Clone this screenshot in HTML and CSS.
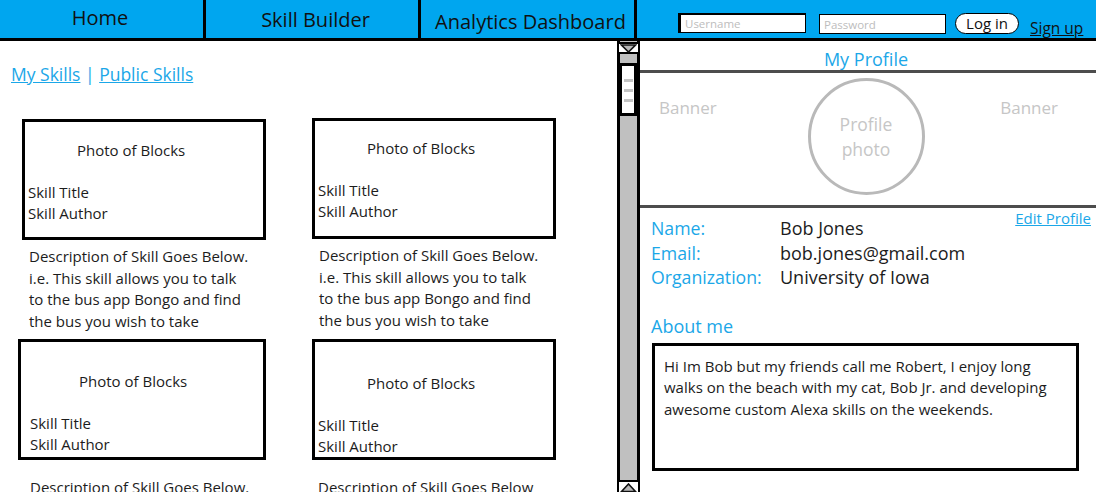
FILE: index.html
```html
<!DOCTYPE html>
<html lang="en">
<head>
<meta charset="utf-8">
<title>Skill Builder - My Profile</title>
<link rel="stylesheet" href="styles.css">
</head>
<body>
<header class="topbar">
  <nav class="tabs">
    <a class="tab tab--home">Home</a>
    <a class="tab tab--builder">Skill Builder</a>
    <a class="tab tab--analytics">Analytics Dashboard</a>
  </nav>
  <form class="login">
    <input class="field field--user" type="text" placeholder="Username">
    <input class="field field--pass" type="password" placeholder="Password">
    <button class="login-btn" type="button">Log in</button>
    <a class="signup" href="#">Sign up</a>
  </form>
</header>
<main class="main">
  <section class="skills">
    <div class="skill-links"><a href="#">My Skills</a> | <a href="#">Public Skills</a></div>
    <div class="skill-grid">
      <article class="skill">
        <div class="skill-card">
          <div class="skill-photo">Photo of Blocks</div>
          <div class="skill-meta">Skill Title<br>Skill Author</div>
        </div>
        <p class="skill-desc">Description of Skill Goes Below.<br>i.e. This skill allows you to talk<br>to the bus app Bongo and find<br>the bus you wish to take</p>
      </article>
      <article class="skill skill--up">
        <div class="skill-card skill-card--tight">
          <div class="skill-photo">Photo of Blocks</div>
          <div class="skill-meta">Skill Title<br>Skill Author</div>
        </div>
        <p class="skill-desc">Description of Skill Goes Below.<br>i.e. This skill allows you to talk<br>to the bus app Bongo and find<br>the bus you wish to take</p>
      </article>
      <article class="skill skill--row2 skill--shift">
        <div class="skill-card">
          <div class="skill-photo skill-photo--wide">Photo of Blocks</div>
          <div class="skill-meta skill-meta--wide">Skill Title<br>Skill Author</div>
        </div>
        <p class="skill-desc skill-desc--wide">Description of Skill Goes Below.<br>i.e. This skill allows you to talk<br>to the bus app Bongo and find<br>the bus you wish to take</p>
      </article>
      <article class="skill skill--row2">
        <div class="skill-card skill-card--deep">
          <div class="skill-photo">Photo of Blocks</div>
          <div class="skill-meta">Skill Title<br>Skill Author</div>
        </div>
        <p class="skill-desc skill-desc--narrow">Description of Skill Goes Below<br>i.e. This skill allows you to talk<br>to the bus app Bongo and find<br>the bus you wish to take</p>
      </article>
    </div>
  </section>
  <div class="scrollbar">
    <div class="scroll-btn">
      <svg width="17" height="9" viewBox="0 0 17 9"><polygon points="1.5,1 15.5,1 8.5,8" fill="#b8b8b8" stroke="#111" stroke-width="1.6"/></svg>
    </div>
    <div class="scroll-track">
      <div class="scroll-thumb">
        <span class="grip"></span><span class="grip"></span><span class="grip"></span>
      </div>
    </div>
    <div class="scroll-btn scroll-btn--bottom">
      <svg width="17" height="9" viewBox="0 0 17 9"><polygon points="1.5,8.5 15.5,8.5 8.5,1" fill="#b8b8b8" stroke="#111" stroke-width="1.6"/></svg>
    </div>
  </div>
  <aside class="profile">
    <h2 class="profile-title">My Profile</h2>
    <div class="banner">
      <span class="banner-text">Banner</span>
      <div class="avatar">Profile<br>photo</div>
      <span class="banner-text banner-text--right">Banner</span>
    </div>
    <div class="info">
      <dl class="info-list">
        <dt>Name:</dt><dd>Bob Jones</dd>
        <dt>Email:</dt><dd>bob.jones@gmail.com</dd>
        <dt>Organization:</dt><dd>University of Iowa</dd>
      </dl>
      <a class="edit-link" href="#">Edit Profile</a>
    </div>
    <h3 class="about-title">About me</h3>
    <div class="about-box">Hi Im Bob but my friends call me Robert, I enjoy long walks on the beach with my cat, Bob Jr. and developing awesome custom Alexa skills on the weekends.</div>
  </aside>
</main>
</body>
</html>
```

FILE: styles.css
```css
* { box-sizing: border-box; }
html, body {
  margin: 0;
  padding: 0;
  width: 1096px;
  height: 492px;
  overflow: hidden;
  background: #fff;
  font-family: "Open Sans", "Noto Sans", sans-serif;
  color: #1c1c1c;
}

/* ---------- top bar ---------- */
.topbar {
  display: flex;
  height: 41px;
  background: #00a6ef;
  border-bottom: 3px solid #000;
}
.tabs { display: flex; }
.tab {
  display: block;
  height: 38px;
  border-right: 3px solid #000;
  text-align: center;
  font-size: 20px;
  line-height: 26px;
  color: #111;
  text-decoration: none;
  white-space: nowrap;
}
.tab--home { width: 206px; padding-top: 5px; padding-right: 3px; }
.tab--builder { width: 215px; padding-top: 7px; padding-left: 7px; }
.tab--analytics { width: 216px; padding-top: 9px; padding-left: 6px; }

.login {
  display: flex;
  align-items: flex-start;
  margin: 0;
  padding-left: 41px;
}
.field {
  width: 128px;
  height: 20px;
  margin-top: 13px;
  padding: 0 0 0 4px;
  background: #fff;
  border: 1px solid #000;
  font-family: inherit;
  font-size: 11.5px;
  outline: none;
}
.field::placeholder { color: #bdbdbd; }
.field--user { border-width: 2px 1px 1px 3px; }
.field--pass { width: 127px; margin-left: 13px; margin-top: 14px; border-width: 1.5px; }
.login-btn {
  width: 64px;
  height: 21px;
  margin: 13px 0 0 9px;
  padding: 0;
  background: #fff;
  border: 1.5px solid #000;
  border-radius: 11px;
  font-family: inherit;
  font-size: 15px;
  line-height: 17px;
  color: #111;
}
.signup {
  margin: 17px 0 0 11px;
  font-size: 15.5px;
  line-height: 22px;
  color: #111;
  text-decoration: underline;
}

/* ---------- main ---------- */
.main {
  display: flex;
  height: 451px;
}

.skills {
  width: 617px;
  padding: 21px 0 0 11px;
  overflow: hidden;
}
.skill-links {
  font-size: 17.5px;
  line-height: 24px;
  color: #1ba7e8;
}
.skill-links a { color: #1ba7e8; text-decoration: underline; }

.skill-grid {
  display: grid;
  grid-template-columns: 244px 244px;
  column-gap: 46px;
  row-gap: 7px;
  margin: 33px 0 0 11px;
}
.skill--shift { margin-left: -4px; }
.skill--up { margin-top: -1px; }
.skill-card {
  height: 121px;
  border: 3px solid #000;
  padding-top: 18px;
}
.skill-card--tight { padding-top: 17px; }
.skill--row2 .skill-card { padding-top: 29px; }
.skill--row2 .skill-card--deep { padding-top: 31px; }
.skill-photo {
  padding-left: 52px;
  font-size: 15px;
  line-height: 20px;
}
.skill-photo--wide { padding-left: 58px; }
.skill-meta {
  margin-top: 22px;
  padding-left: 3px;
  font-size: 15px;
  line-height: 21px;
}
.skill-meta--wide { padding-left: 9px; }
.skill-desc {
  margin: 6px 0 0;
  padding-left: 7px;
  font-size: 15px;
  line-height: 21.5px;
  white-space: nowrap;
}
.skill--row2 .skill-desc { margin-top: 17px; }
.skill-desc--wide { padding-left: 12px; }
.skill-desc--narrow { padding-left: 6px; }

/* ---------- scrollbar ---------- */
.scrollbar {
  display: flex;
  flex-direction: column;
  width: 23px;
  background: #c0c0c0;
  border-left: 3px solid #000;
  border-right: 3px solid #000;
}
.scroll-btn {
  height: 12px;
  margin: 1px -3px 0;
  background: #fff;
  border: 2px solid #000;
  display: flex;
  align-items: center;
  justify-content: center;
}
.scroll-btn--bottom { margin: 0 -3px; border-bottom: 0; }
.scroll-track { flex: 1; padding-top: 9px; }
.scroll-thumb {
  width: 18px;
  height: 53px;
  margin-left: -1px;
  background: #fff;
  border: 3px solid #000;
  padding: 13px 0 0 2px;
  display: flex;
  flex-direction: column;
  gap: 7px;
}
.grip {
  display: block;
  width: 9px;
  height: 3px;
  background: #c4c4c4;
}

/* ---------- profile ---------- */
.profile {
  width: 456px;
}
.profile-title {
  margin: 0;
  height: 32px;
  padding: 6px 4px 0 0;
  border-bottom: 3px solid #4d4d4d;
  text-align: center;
  font-weight: normal;
  font-size: 18px;
  line-height: 24px;
  color: #1ba7e8;
}
.banner {
  display: grid;
  grid-template-columns: 1fr 117px 1fr;
  height: 135px;
  border-bottom: 3px solid #4d4d4d;
}
.banner-text {
  padding: 23px 0 0 19px;
  font-size: 17px;
  line-height: 24px;
  color: #c6c6c6;
}
.banner-text--right { justify-self: end; padding: 23px 38px 0 0; }
.avatar {
  width: 117px;
  height: 117px;
  margin-top: 5px;
  margin-left: -2px;
  border: 3px solid #b9b9b9;
  border-radius: 50%;
  display: flex;
  align-items: center;
  justify-content: center;
  text-align: center;
  font-size: 17.5px;
  line-height: 25px;
  color: #c6c6c6;
}

.info {
  display: flex;
  justify-content: space-between;
  padding: 0 5px 0 11px;
}
.info-list {
  display: grid;
  grid-template-columns: 129px auto;
  margin: 8px 0 0;
  font-size: 18px;
  line-height: 24.5px;
}
.info-list dt { color: #1ba7e8; font-size: 17.7px; }
.info-list dd { margin: 0; color: #1c1c1c; }
.edit-link {
  font-size: 15px;
  line-height: 20px;
  color: #1ba7e8;
  text-decoration: underline;
}
.about-title {
  margin: 24px 0 0 11px;
  font-weight: normal;
  font-size: 18px;
  line-height: 24px;
  color: #1ba7e8;
}
.about-box {
  width: 427px;
  height: 128px;
  margin: 5px 0 0 12px;
  padding: 10px 10px 0 9px;
  border: 3px solid #000;
  font-size: 15px;
  line-height: 21.5px;
}
```
